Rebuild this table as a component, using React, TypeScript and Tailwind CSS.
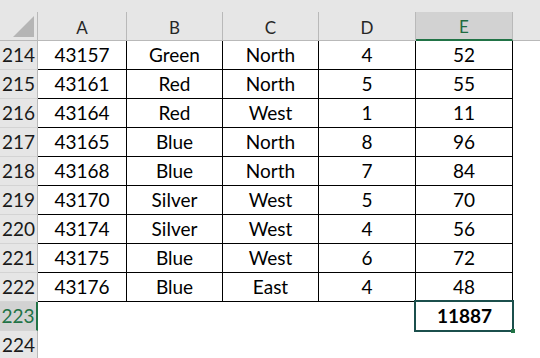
import React from "react";

const rows: [number, string, string, string, string, string][] = [
  [214, "43157", "Green", "North", "4", "52"],
  [215, "43161", "Red", "North", "5", "55"],
  [216, "43164", "Red", "West", "1", "11"],
  [217, "43165", "Blue", "North", "8", "96"],
  [218, "43168", "Blue", "North", "7", "84"],
  [219, "43170", "Silver", "West", "5", "70"],
  [220, "43174", "Silver", "West", "4", "56"],
  [221, "43175", "Blue", "West", "6", "72"],
  [222, "43176", "Blue", "East", "4", "48"],
];

const grid = "grid grid-cols-[38px_89px_96px_96px_97px_97px_1fr]";
const font = { fontFamily: "Lato, 'Open Sans', sans-serif" };

function RowHead({ n, active }: { n: number; active?: boolean }) {
  return (
    <div
      className={
        "h-[29px] flex items-center justify-center border-b border-[#d4d4d4] text-[19px] " +
        (active
          ? "bg-[#d2d2d2] border-r-2 border-r-[#217346] text-[#217346]"
          : "bg-[#e6e6e6] border-r border-r-[#b9b9b9] text-[#1a1a1a]")
      }
    >
      {n}
    </div>
  );
}

export default function App() {
  const cols = ["A", "B", "C", "D", "E"];
  return (
    <div className="w-[540px] h-[358px] overflow-hidden bg-white text-black" style={font}>
      <div className="h-[12px] bg-[#e6e6e6]" />
      <div className={grid + " bg-[#e6e6e6]"}>
        <div className="h-[29px] border-r border-b border-[#b9b9b9] flex items-end justify-end pr-[3px] pb-[3px]">
          <svg width="21" height="21" viewBox="0 0 21 21">
            <polygon points="21,0 21,21 0,21" fill="#b5b5b5" />
          </svg>
        </div>
        {cols.map((c) =>
          c === "E" ? (
            <div
              key={c}
              className="h-[29px] flex items-center justify-center pt-[3px] bg-[#d2d2d2] border-r border-r-[#b9b9b9] border-b-2 border-b-[#217346] text-[17px] text-[#1e6b41]"
            >
              {c}
            </div>
          ) : (
            <div
              key={c}
              className="h-[29px] flex items-center justify-center pt-[3px] border-r border-b border-[#b9b9b9] text-[17px] text-[#262626]"
            >
              {c}
            </div>
          )
        )}
        <div className="h-[29px] border-b border-[#b9b9b9]" />
      </div>
      {rows.map((r) => (
        <div key={r[0]} className={grid}>
          <RowHead n={r[0]} />
          {r.slice(1).map((v, i) => (
            <div
              key={i}
              className="h-[29px] flex items-center justify-center border-r border-b border-black text-[19px]"
            >
              {v}
            </div>
          ))}
          <div className="h-[29px]" />
        </div>
      ))}
      <div className={grid}>
        <RowHead n={223} active />
        <div />
        <div />
        <div />
        <div />
        <div className="relative h-[29px] flex items-center justify-center text-[19px] font-bold">
          11887
          <div className="absolute left-[-2px] top-[-2px] w-[100px] h-[32px] border-2 border-[#1b4f4c]" />
          <div className="absolute left-[95px] top-[27px] w-[4px] h-[4px] bg-[#217346]" />
        </div>
        <div />
      </div>
      <div className={grid}>
        <RowHead n={224} />
        <div />
      </div>
    </div>
  );
}
